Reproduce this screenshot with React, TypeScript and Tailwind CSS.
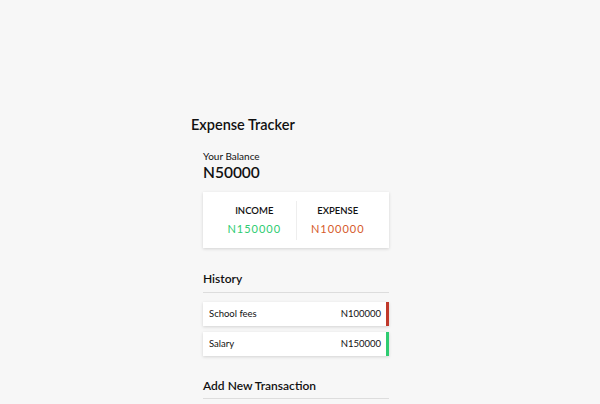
import React from "react";

type Transaction = {
  id: number;
  text: string;
  amount: number;
};

const transactions: Transaction[] = [
  { id: 1, text: "School fees", amount: -100000 },
  { id: 2, text: "Salary", amount: 150000 },
];

export default function App() {
  return (
    <div className="min-h-screen bg-[#f7f7f7] font-['Lato',sans-serif] text-[#111]">
      <div className="ml-[191px] w-[198px] pt-[115px]">
        <h2 className="text-[14.5px] font-semibold leading-[20px]">Expense Tracker</h2>

        <div className="ml-3 mt-[15px]">
          <h4 className="text-[10px] leading-[13px]">Your Balance</h4>
          <h1 className="text-[15.5px] font-semibold leading-[18px]">N50000</h1>

          <div className="mt-[11px] flex h-[56px] items-center bg-white px-[10px] shadow-[0_1px_3px_rgba(0,0,0,0.15)]">
            <div className="flex-1 border-r border-[#eee] py-[4px] text-center">
              <h4 className="text-[9.5px] font-semibold uppercase leading-[12px]">Income</h4>
              <p className="mt-[5px] text-[11px] leading-[14px] tracking-[1px] text-[#2ecc71]">N150000</p>
            </div>
            <div className="flex-1 py-[4px] text-center">
              <h4 className="text-[9.5px] font-semibold uppercase leading-[12px]">Expense</h4>
              <p className="mt-[5px] text-[11px] leading-[14px] tracking-[1px] text-[#d65a2a]">N100000</p>
            </div>
          </div>

          <h3 className="mt-[23px] border-b border-[#ddd] pb-[6px] text-[12px] font-semibold leading-[15px]">History</h3>

          <ul className="mt-[9px] flex flex-col gap-[6px]">
            {transactions.map((t) => (
              <li
                key={t.id}
                className={`flex h-[24px] items-center justify-between border-r-[3px] bg-white pl-[6px] pr-[5px] text-[9.5px] shadow-[0_1px_3px_rgba(0,0,0,0.15)] ${
                  t.amount < 0 ? "border-[#c0392b]" : "border-[#2ecc71]"
                }`}
              >
                <span>{t.text}</span>
                <span>N{Math.abs(t.amount)}</span>
              </li>
            ))}
          </ul>

          <h3 className="mt-[22px] border-b border-[#ddd] pb-[5px] text-[12px] font-semibold leading-[15px]">
            Add New Transaction
          </h3>
        </div>
      </div>
    </div>
  );
}
